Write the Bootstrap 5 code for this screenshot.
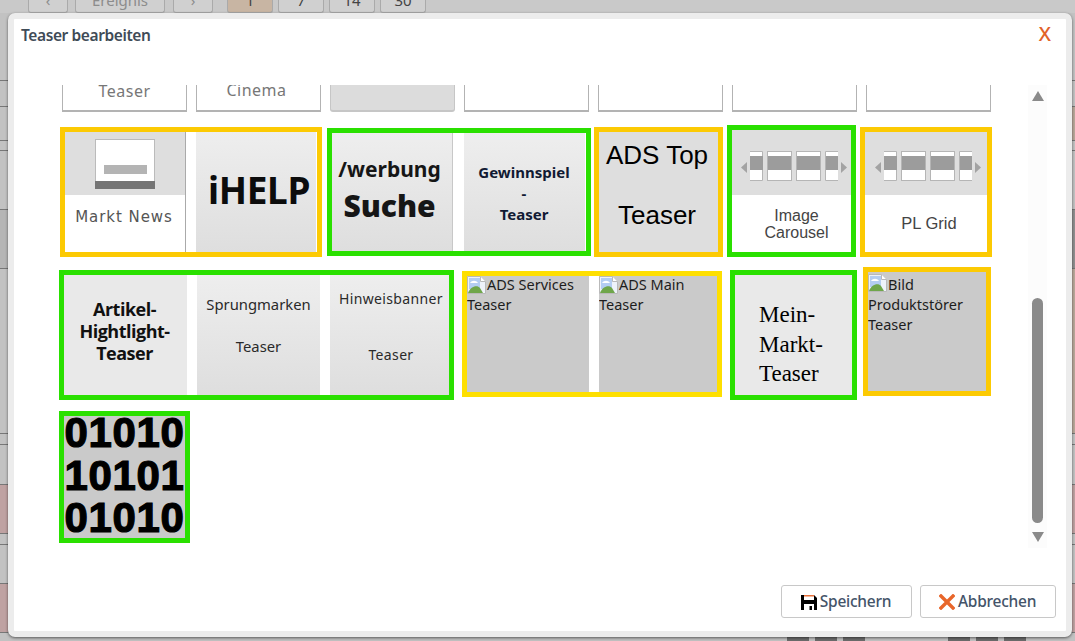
<!DOCTYPE html>
<html lang="de">
<head>
<meta charset="utf-8">
<title>Teaser bearbeiten</title>
<link href="https://cdn.jsdelivr.net/npm/bootstrap@5.3.0/dist/css/bootstrap.min.css" rel="stylesheet">
<style>
html,body{height:641px;overflow:hidden;background:#c9c9c9;font-family:"Noto Sans",sans-serif}
/* dimmed page behind the dialog */
.page{height:641px;background:#c9c9c9;overflow:hidden;position:relative}
.toolbar{height:13px;padding-left:28px;overflow:hidden}
.toolbar .tb{height:13px;border:1px solid #aaa;border-top:0;border-radius:0 0 3px 3px;background:#d0d0d0;color:#8c8c8c;font-size:15px;line-height:0;text-align:center;width:46px;margin-right:5px;flex:none}
.toolbar .tb.on{background:#c8b5a3;color:#444}
.toolbar .tb.dark{color:#444}
.toolbar .w1{width:40px;margin-right:7px}.toolbar .w2{width:90px;margin-right:8px}.toolbar .w3{margin-right:14px}
.bgrow{border-bottom:1px solid #777;background:#c2c2c2}
.bgrow.pink{background:#bfa2a2}
.bgrow.tan{background:linear-gradient(90deg,#c2c2c2 0 1070px,#b9a89a 1070px)}
.bgrow.dk{background:linear-gradient(90deg,#b5b5b5 0 1070px,#8f8f8f 1070px)}
.r1{height:68px}.r2{height:26px}.r3{height:34px}.r4{height:10px}.r5{height:59px}.r6{height:59px}.r7{height:165px}.r8{height:11px}.r9{height:40px}.r10{height:49px}.r11{height:11px}.r12{height:39px}.r13{height:49px}
.r14{height:8px;padding-left:787px;gap:6px;align-items:flex-end;border:0}
.r14 i{display:block;width:22px;height:5px;background:#6c6c6c}
.r14 i.gapl{margin-left:77px}
/* dialog */
.dlg.modal-content{position:absolute;left:8px;top:13px;width:1064px;height:624px;border:6px solid #ececec;border-radius:7px;background:#fff;box-shadow:0 1px 3px rgba(0,0,0,.55);overflow:hidden}
.dlg .modal-header{height:66px;padding:0 6px 0 7px;border:0;align-items:flex-start}
.dlg .modal-title{font-size:15.5px;font-weight:600;color:#3f4b57;line-height:20px;margin-top:6px;letter-spacing:-.4px}
.closex{color:#e2622a;font-size:20px;line-height:20px;margin:5px 9px 0 0;font-family:"Noto Sans",sans-serif;text-decoration:none;font-weight:500}
.dlg .modal-body{padding:0;height:463px;flex:none;overflow:hidden}
.scrollarea{width:1014px;overflow:hidden;height:463px}
.row-clip{height:27px;padding-left:48px;gap:9px}
.clip{width:125px;height:27px;border:solid #b3b3b3;border-width:0 1.5px 2px;color:#777;font-size:16px;text-align:center;line-height:13px;overflow:hidden;letter-spacing:.5px}
.clip.cin{padding-right:4px;line-height:11px}
.clip.fill{background:#dcdcdc;border-radius:0 0 3px 3px;border-color:#c6c6c6}
.trow{align-items:flex-start}
.t2{margin-top:13px;height:132px;padding-left:46px}
.t3{margin-top:10px;height:133px;padding-left:45px}
.t4{margin-top:11px;padding-left:45px}
.fr{border:5px solid #2ae000;display:flex;flex:none;box-sizing:border-box}
.fr.y{border-color:#fcca03}.fr.y2{border-color:#fedf00}
.tile{flex:none;text-align:center;color:#111;overflow:hidden;height:100%}
.grad{background:linear-gradient(#eee,#dedede)}
.flat{background:#e9e9e9}
.gray{background:#cacaca}
.lite{background:#dedede}
/* row 2 */
.a1{width:262px;height:130px;margin-top:2px}
.a2{width:264px;height:128px;margin:3px 0 0 5px}
.a3{width:129px;height:130px;margin:2px 0 0 3px}
.a4{width:129px;height:132px;margin:0 0 0 4px}
.a5{width:132px;height:130px;margin:2px 0 0 4px}
/* row 3 */
.b1{width:395px;height:130px;margin-top:3px}
.b2{width:260px;height:126px;margin:4px 0 0 8px}
.b3{width:127px;height:130px;margin:3px 0 0 8px}
.b4{width:128px;height:129px;margin:0 0 0 6px}
/* row 4 */
.c1{width:131px;height:132px}
.pic{height:63px;display:flex;align-items:center;justify-content:center}
.ic .pic{height:65px}
.ic .pic svg{margin:7px 0 0 5px}
.pl .pic svg{margin:5px 0 0 4px}
.cap{color:#555;font-size:15px;line-height:17px}
.mn{width:121px;border-right:1px solid #aaa;margin-right:10px}
.mn .cap{font-family:"DejaVu Sans",sans-serif;font-size:15px;padding:14px 2px 0 0;letter-spacing:.95px;white-space:nowrap}
.ihelp{width:120px;font-weight:700;font-size:37px;line-height:116px;letter-spacing:-.3px;padding-left:6px;color:#0c0c0c}
.wb{width:121px;margin-right:11px;font-weight:700;padding:22px 5px 0 0;font-size:21px;line-height:28px;border-right:1px solid #c8c8c8;color:#161616;white-space:nowrap}
.wb b{display:block;font-size:30px;line-height:46px}
.gw{width:121px;font-weight:700;font-size:15px;line-height:21px;padding:29px 1px 0 0;color:#111a33;white-space:nowrap}
.ads{width:119px;font-family:"Liberation Sans",sans-serif;font-size:26px;line-height:60px;white-space:nowrap;color:#000;padding-right:3px}
.ads div{margin-top:-7px}
.ic{width:119px}.ic .cap,.pl .cap{font-family:"Liberation Sans",sans-serif;font-size:16px;line-height:17px;color:#444}
.ic .cap{padding:12px 0 0 10px}
.pl{width:122px}.pl .cap{padding:20px 0 0 6px;font-size:16.500px}
.ar{width:123px;margin-right:10px;font-weight:700;font-size:18px;line-height:22px;padding:23px 2px 0 0;font-family:"Open Sans",sans-serif;letter-spacing:-.5px;white-space:nowrap}
.sm{width:123px;margin-right:10px;font-size:14.800px;padding-top:19px;line-height:20px;color:#2a2a2a}
.sm span,.hw span{display:block}
.sm span+span{margin-top:22px}
.hw{width:119px;font-size:14px;line-height:19px;padding:14px 0 0 3px;color:#2a2a2a;letter-spacing:.35px;white-space:nowrap}
.hw span+span{margin-top:37px}
.alt{font-size:14.5px;line-height:20px;text-align:left;padding:0;color:#1d1d1d}
.alt svg{vertical-align:top;margin:2px 1px 0 0}
.alt .up2{margin-top:-2px}
.a-l{width:122px;margin-right:10px}.a-r{width:118px}
.a-p{width:118px;padding-top:2px}
.a-p svg{margin-top:0}
.mm{width:117px;font-family:"Liberation Serif",serif;font-size:23px;line-height:29.500px;text-align:left;padding:25px 0 0 24px;color:#000}
.bin{width:121px;font-family:"Liberation Sans",sans-serif;font-weight:700;font-size:42px;line-height:33px;letter-spacing:.6px;color:#000;-webkit-text-stroke:1.2px #000;white-space:nowrap}
.bin div{height:33px;margin-bottom:9.500px}
.bin div:last-child{margin-bottom:0}
/* scrollbar */
.sbar{width:19px;height:463px;background:#fcfcfc;padding-top:6px}
.sbar .up{width:0;height:0;border:6px solid transparent;border-top:0;border-bottom:10px solid #8a8a8a;margin:0 auto}
.sbar .th{width:11px;height:225px;margin:197px auto 9px;background:#8a8a8a;border-radius:6px}
.sbar .dn{width:0;height:0;border:6px solid transparent;border-bottom:0;border-top:10px solid #8a8a8a;margin:0 auto}
/* footer */
.dlg .modal-footer{border:0;padding:37px 10px 0 0;gap:8px;display:flex;justify-content:flex-end;align-items:flex-start;flex-wrap:nowrap}
.dlg .btn{margin:0;height:33px;padding:0 1px 0 0;font-size:15.5px;line-height:31px;color:#445469;background:#fff;border:1px solid #c8c8c8;border-radius:3px;display:flex;align-items:center;justify-content:center;gap:3px;font-weight:500;letter-spacing:-.25px}
.bs{width:131px}.ba{width:136px}
</style>
</head>
<body>
<div class="page">
  <div class="toolbar d-flex">
    <div class="tb w1">‹</div><div class="tb w2">Ereignis</div><div class="tb w1 w3">›</div>
    <div class="tb on dark">1</div><div class="tb dark">7</div><div class="tb dark">14</div><div class="tb dark">30</div>
  </div>
  <div class="bgrow r1"></div><div class="bgrow r2"></div><div class="bgrow r3 tan"></div>
  <div class="bgrow r4"></div><div class="bgrow r5"></div><div class="bgrow r6 dk"></div>
  <div class="bgrow r7 tan"></div><div class="bgrow r8"></div><div class="bgrow r9"></div>
  <div class="bgrow r10 pink"></div><div class="bgrow r11"></div><div class="bgrow r12"></div>
  <div class="bgrow r13 pink"></div>
  <div class="bgrow r14 d-flex"><i></i><i></i><i></i><i class="gapl"></i><i></i><i></i></div>

  <div class="modal-content dlg">
    <div class="modal-header">
      <h5 class="modal-title">Teaser bearbeiten</h5>
      <a class="closex" href="#">X</a>
    </div>
    <div class="modal-body d-flex">
      <div class="scrollarea">
        <div class="row-clip d-flex">
          <div class="clip">Teaser</div>
          <div class="clip cin">Cinema</div>
          <div class="clip fill"></div>
          <div class="clip"></div><div class="clip"></div><div class="clip"></div><div class="clip"></div>
        </div>

        <div class="trow t2 d-flex">
          <div class="fr y a1">
            <div class="tile mn">
              <div class="pic lite">
                <svg width="60" height="50" viewBox="0 0 60 50"><rect x=".5" y=".5" width="59" height="49" fill="#fff" stroke="#bbb"/><rect x="9" y="26" width="43" height="9" fill="#b4b4b4"/><rect y="42" width="60" height="8" fill="#757575"/></svg>
              </div>
              <div class="cap">Markt News</div>
            </div>
            <div class="tile ihelp grad">iHELP</div>
          </div>
          <div class="fr a2">
            <div class="tile wb grad">/werbung<b>Suche</b></div>
            <div class="tile gw grad">Gewinnspiel<br>-<br>Teaser</div>
          </div>
          <div class="fr y a3"><div class="tile ads lite"><div>ADS Top<br>Teaser</div></div></div>
          <div class="fr a4">
            <div class="tile ic">
              <div class="pic lite">
                <svg width="106" height="30" viewBox="0 0 106 30"><path d="M6 11v11l-6-5.500z" fill="#a3a3a3"/><path d="M100 11v11l6-5.500z" fill="#a3a3a3"/><g fill="#fff" stroke="#b5b5b5"><path d="M9 .500h12.500v29H9"/><rect x="26.500" y=".5" width="24" height="29"/><rect x="55.500" y=".5" width="24" height="29"/><path d="M97 .500H84.500v29H97"/></g><g fill="#9c9c9c"><rect x="9" y="5" width="13" height="14"/><rect x="27" y="5" width="23" height="14"/><rect x="56" y="5" width="23" height="14"/><rect x="85" y="5" width="12" height="14"/></g></svg>
              </div>
              <div class="cap">Image<br>Carousel</div>
            </div>
          </div>
          <div class="fr y a5">
            <div class="tile pl">
              <div class="pic lite">
                <svg width="106" height="30" viewBox="0 0 106 30"><path d="M6 11v11l-6-5.500z" fill="#a3a3a3"/><path d="M100 11v11l6-5.500z" fill="#a3a3a3"/><g fill="#fff" stroke="#b5b5b5"><path d="M9 .500h12.500v29H9"/><rect x="26.500" y=".5" width="24" height="29"/><rect x="55.500" y=".5" width="24" height="29"/><path d="M97 .500H84.500v29H97"/></g><g fill="#9c9c9c"><rect x="9" y="5" width="13" height="14"/><rect x="27" y="5" width="23" height="14"/><rect x="56" y="5" width="23" height="14"/><rect x="85" y="5" width="12" height="14"/></g></svg>
              </div>
              <div class="cap">PL Grid</div>
            </div>
          </div>
        </div>

        <div class="trow t3 d-flex">
          <div class="fr b1">
            <div class="tile ar flat">Artikel-<br>Hightlight-<br>Teaser</div>
            <div class="tile sm grad"><span>Sprungmarken</span><span>Teaser</span></div>
            <div class="tile hw grad"><span>Hinweisbanner</span><span>Teaser</span></div>
          </div>
          <div class="fr y2 b2">
            <div class="tile alt gray a-l"><div class="up2"><svg width="19" height="18" viewBox="0 0 19 18"><path d="M.5.500h13l5 5v12H.5z" fill="#eef2fa" stroke="#b9b9b9"/><path d="M13.500.500v5h5" fill="#fff" stroke="#b9b9b9"/><path d="M2 2h11v11H2z" fill="#b4cdf2"/><path d="M3 7c2-3 6-3 8 0z" fill="#fff"/><path d="M1 17c2-6 9-9 12-5l3 5z" fill="#6fa64a"/></svg>ADS Services Teaser</div></div>
            <div class="tile alt gray a-r"><div class="up2"><svg width="19" height="18" viewBox="0 0 19 18"><path d="M.5.500h13l5 5v12H.5z" fill="#eef2fa" stroke="#b9b9b9"/><path d="M13.500.500v5h5" fill="#fff" stroke="#b9b9b9"/><path d="M2 2h11v11H2z" fill="#b4cdf2"/><path d="M3 7c2-3 6-3 8 0z" fill="#fff"/><path d="M1 17c2-6 9-9 12-5l3 5z" fill="#6fa64a"/></svg>ADS Main Teaser</div></div>
          </div>
          <div class="fr b3"><div class="tile mm flat">Mein-<br>Markt-<br>Teaser</div></div>
          <div class="fr y b4"><div class="tile alt gray a-p"><svg width="19" height="18" viewBox="0 0 19 18"><path d="M.5.500h13l5 5v12H.5z" fill="#eef2fa" stroke="#b9b9b9"/><path d="M13.500.500v5h5" fill="#fff" stroke="#b9b9b9"/><path d="M2 2h11v11H2z" fill="#b4cdf2"/><path d="M3 7c2-3 6-3 8 0z" fill="#fff"/><path d="M1 17c2-6 9-9 12-5l3 5z" fill="#6fa64a"/></svg>Bild Produktstörer Teaser</div></div>
        </div>

        <div class="trow t4 d-flex">
          <div class="fr c1"><div class="tile bin gray"><div>01010</div><div>10101</div><div>01010</div></div></div>
        </div>
      </div>
      <div class="sbar"><div class="up"></div><div class="th"></div><div class="dn"></div></div>
    </div>
    <div class="modal-footer">
      <button type="button" class="btn bs"><svg width="16" height="16" viewBox="0 0 16 16"><path d="M0 1h13l3 3v12H0z" fill="#000"/><rect x="3" y="1" width="10" height="5" fill="#fff"/><rect x="3" y="1" width="10" height="1.500" fill="#e8703a"/><rect x="3" y="10" width="10" height="6" fill="#fff"/><rect x="8.500" y="12" width="2.500" height="4" fill="#000"/></svg>Speichern</button>
      <button type="button" class="btn ba"><svg width="16" height="16" viewBox="0 0 16 16"><path d="M2 2l12 12M14 2L2 14" stroke="#e8662a" stroke-width="3.400" stroke-linecap="square"/></svg>Abbrechen</button>
    </div>
  </div>
</div>
<script src="https://cdn.jsdelivr.net/npm/bootstrap@5.3.0/dist/js/bootstrap.bundle.min.js"></script>
</body>
</html>
